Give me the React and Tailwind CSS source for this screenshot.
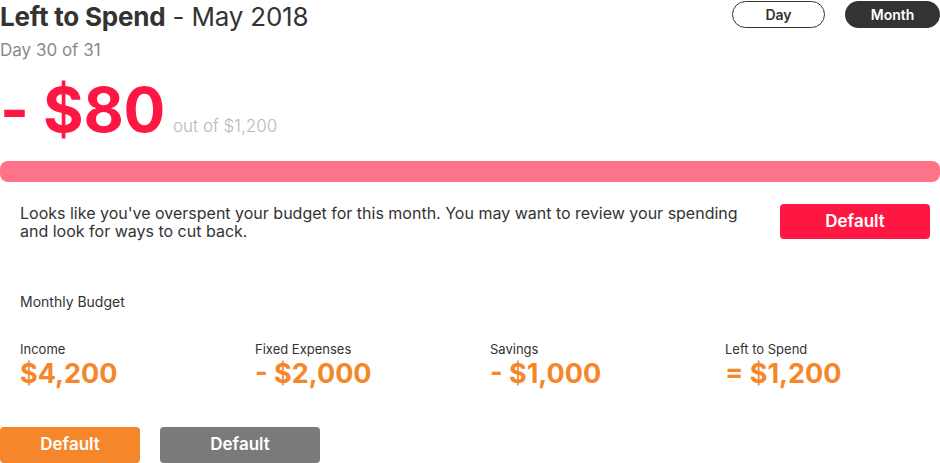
import React from "react";

export default function App() {
  const cols = [
    { label: "Income", value: "$4,200" },
    { label: "Fixed Expenses", value: "- $2,000" },
    { label: "Savings", value: "- $1,000" },
    { label: "Left to Spend", value: "= $1,200" },
  ];
  return (
    <div className="w-[940px] h-[463px] bg-white overflow-hidden font-['Inter',sans-serif] text-[#333]">
      <div className="flex items-start justify-between">
        <h1 className="text-[26px] leading-[34px] tracking-[-0.2px] text-[#333]">
          <span className="font-bold">Left to Spend</span>
          <span className="font-normal"> - May 2018</span>
        </h1>
        <div className="flex gap-5 pt-px">
          <button className="w-[93px] h-[27px] rounded-full border border-[#333] bg-white text-[14px] font-semibold text-[#333]">
            Day
          </button>
          <button className="w-[95px] h-[27px] rounded-full bg-[#333] text-[14px] font-semibold text-white">
            Month
          </button>
        </div>
      </div>
      <div className="text-[17px] leading-[22px] text-[#8a8a8a] mt-[5px]">Day 30 of 31</div>
      <div className="flex items-baseline mt-[12px] h-[74px]">
        <span className="text-[62px] leading-[74px] font-bold text-[#ff1744] tracking-[-0.3px]">- $80</span>
        <span className="ml-[8px] text-[17px] font-light text-[#b8b8b8]">out of $1,200</span>
      </div>
      <div className="mt-[14px] h-[21px] w-full rounded-[8px] bg-[#ff7389]" />
      <div className="flex items-start justify-between pl-5 pr-[10px] mt-[22px]">
        <p className="text-[16px] leading-[18px] text-[#333] w-[730px]">
          Looks like you've overspent your budget for this month. You may want to review your spending and look for ways to cut back.
        </p>
        <button className="w-[150px] h-[35px] rounded-[4px] bg-[#ff1744] text-white text-[17px] font-semibold">
          Default
        </button>
      </div>
      <div className="px-5 mt-[54px] text-[14px] leading-[16px] text-[#333]">Monthly Budget</div>
      <div className="flex pl-5 mt-[31px]">
        {cols.map((c) => (
          <div key={c.label} className="flex flex-col w-[235px] shrink-0">
            <span className="text-[13px] leading-[16px] text-[#333]">{c.label}</span>
            <span className="mt-[2px] text-[27px] leading-[30px] font-bold text-[#f5862a]">{c.value}</span>
          </div>
        ))}
      </div>
      <div className="flex gap-5 mt-[38px]">
        <button className="w-[140px] h-[36px] rounded-[4px] bg-[#f5862a] text-white text-[17px] font-semibold">
          Default
        </button>
        <button className="w-[160px] h-[36px] rounded-[4px] bg-[#7a7a7a] text-white text-[17px] font-semibold">
          Default
        </button>
      </div>
    </div>
  );
}
